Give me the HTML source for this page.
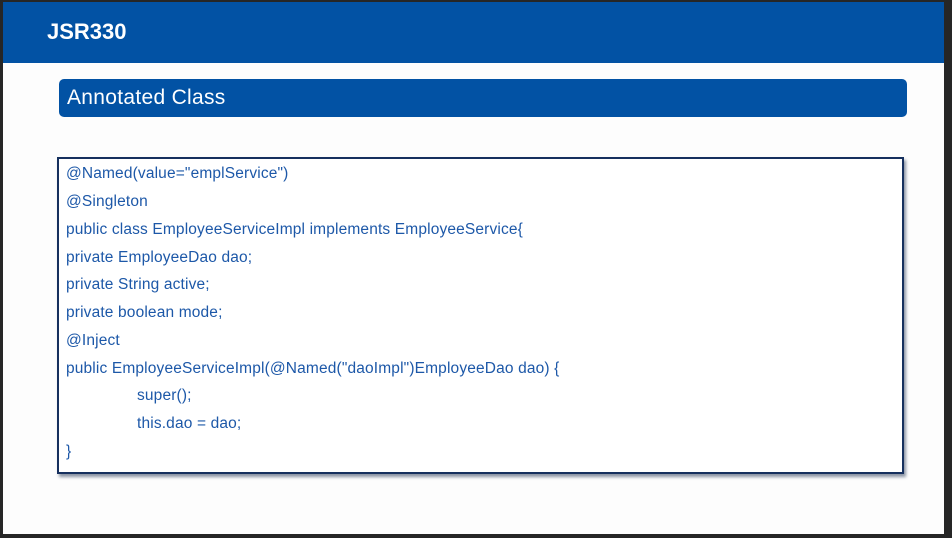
<!DOCTYPE html>
<html><head><style>
body{margin:0;width:952px;height:538px;background:#262626;position:relative;overflow:hidden;font-family:"Liberation Sans",sans-serif}
#slide{position:absolute;left:3px;top:2px;width:941px;height:532px;background:#fdfdfd}
#hdr{position:absolute;left:0;top:0;width:941px;height:61px;background:#0252a4}
#hdr span{position:absolute;left:44px;top:17px;color:#fff;font-weight:bold;font-size:22px}
#bar{position:absolute;left:56px;top:77px;width:848px;height:38px;background:#0252a4;border-radius:5px}
#bar span{position:absolute;left:8px;top:7px;color:#fff;font-size:21px;letter-spacing:0.3px}
#box{position:absolute;left:54px;top:155px;width:843px;height:313px;background:#fff;border:2px solid #16305e;box-shadow:2px 3px 3px #8a93a3}
.l{position:absolute;left:7px;color:#1d58a8;font-size:15.5px;white-space:pre;letter-spacing:0.15px}
</style></head><body>
<div id="slide">
<div id="hdr"><span>JSR330</span></div>
<div id="bar"><span>Annotated Class</span></div>
<div id="box">
<div class="l" style="top:6px">@Named(value="emplService")</div>
<div class="l" style="top:34px">@Singleton</div>
<div class="l" style="top:62px">public class EmployeeServiceImpl implements EmployeeService{</div>
<div class="l" style="top:90px">private EmployeeDao dao;</div>
<div class="l" style="top:117px">private String active;</div>
<div class="l" style="top:145px">private boolean mode;</div>
<div class="l" style="top:173px">@Inject</div>
<div class="l" style="top:201px">public EmployeeServiceImpl(@Named("daoImpl")EmployeeDao dao) {</div>
<div class="l" style="top:228px;left:78px">super();</div>
<div class="l" style="top:256px;left:78px">this.dao = dao;</div>
<div class="l" style="top:284px">}</div>
</div>
</div>
</body></html>
